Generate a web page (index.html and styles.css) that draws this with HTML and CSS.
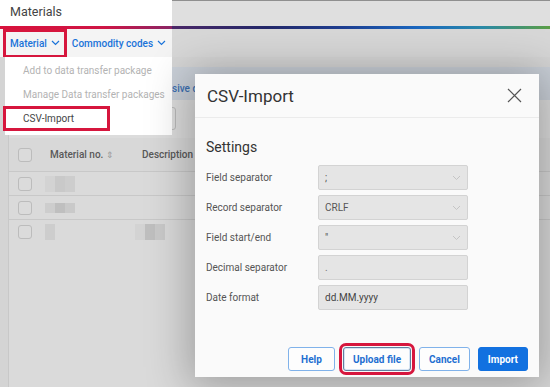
FILE: index.html
```html
<!DOCTYPE html>
<html>
<head>
	<meta charset="utf-8" />
	<title>Materials</title>
	<link rel="stylesheet" href="styles.css">
</head>
<body>
<div class="page">
	<div class="topbar">
		<div class="brand">Materials</div>
		<div class="topbar-rest"></div>
	</div>
	<div class="stripe">
		<div class="stripe-lit"></div>
		<div class="stripe-dim"></div>
	</div>
	<div class="navbar">
		<div class="nav-lit">
			<span class="nav-item nav-hl">Material
				<svg width="9" height="6" viewBox="0 0 9 6"><path d="M1 1l3.5 3.5L8 1" fill="none" stroke="#1a73d9" stroke-width="1.2"/></svg>
			</span>
			<span class="nav-item">Commodity codes
				<svg width="9" height="6" viewBox="0 0 9 6"><path d="M1 1l3.5 3.5L8 1" fill="none" stroke="#1a73d9" stroke-width="1.2"/></svg>
			</span>
		</div>
		<div class="nav-rest"></div>
	</div>
	<div class="main">
		<div class="card">
			<div class="card-tabs"><span class="tab-link">sive d</span></div>
			<div class="card-tools"><span class="tool-btn"></span></div>
			<div class="thead">
				<div class="cell-check"><span class="checkbox"></span></div>
				<div class="cell-no">Material no. <span class="sort">&#8661;</span></div>
				<div class="cell-desc">Description</div>
			</div>
			<div class="trow">
				<div class="cell-check"><span class="checkbox"></span></div>
				<div class="cell-no">
					<span class="blur blur-tall"><i class="p1"></i><i class="p3"></i><i class="p2"></i></span>
				</div>
			</div>
			<div class="trow">
				<div class="cell-check"><span class="checkbox"></span></div>
				<div class="cell-no">
					<span class="blur"><i class="p2"></i><i class="p4"></i><i class="p3"></i></span>
				</div>
			</div>
			<div class="trow trow-last">
				<div class="cell-check"><span class="checkbox"></span></div>
				<div class="cell-no">
					<span class="blur blur-tall"><i class="p2"></i></span>
				</div>
				<div class="cell-desc">
					<span class="blur blur-tall blur-desc"><i class="p1"></i><i class="p4"></i><i class="p3"></i></span>
				</div>
			</div>
		</div>
	</div>

	<ul class="menu">
		<li class="disabled">Add to data transfer package</li>
		<li class="disabled">Manage Data transfer packages</li>
		<li><span class="menu-hl">CSV-Import</span></li>
	</ul>

	<div class="modal">
		<div class="modal-head">
			<span class="modal-title">CSV-Import</span>
			<svg class="close" width="15" height="15" viewBox="0 0 15 15"><path d="M1 1l13 13M14 1L1 14" stroke="#555" stroke-width="1.2" fill="none"/></svg>
		</div>
		<div class="modal-body">
			<div class="section-title">Settings</div>
			<div class="form">
				<label>Field separator</label>
				<div class="field select">;<svg width="9" height="6" viewBox="0 0 9 6"><path d="M1 1l3.5 3.5L8 1" fill="none" stroke="#c4c4c4" stroke-width="1"/></svg></div>
				<label>Record separator</label>
				<div class="field select">CRLF<svg width="9" height="6" viewBox="0 0 9 6"><path d="M1 1l3.5 3.5L8 1" fill="none" stroke="#c4c4c4" stroke-width="1"/></svg></div>
				<label>Field start/end</label>
				<div class="field select">"<svg width="9" height="6" viewBox="0 0 9 6"><path d="M1 1l3.5 3.5L8 1" fill="none" stroke="#c4c4c4" stroke-width="1"/></svg></div>
				<label>Decimal separator</label>
				<div class="field">.</div>
				<label>Date format</label>
				<div class="field field-dark">dd.MM.yyyy</div>
			</div>
		</div>
		<div class="modal-foot">
			<button class="btn">Help</button>
			<button class="btn btn-focus">Upload file</button>
			<button class="btn">Cancel</button>
			<button class="btn btn-primary">Import</button>
		</div>
	</div>
</div>
</body>
</html>
```

FILE: styles.css
```css
* {
	margin: 0;
	padding: 0;
	box-sizing: border-box;
}
ul {
	list-style: none;
}
body {
	font-family: Roboto, "Liberation Sans", sans-serif;
	background: #d9d9d9;
	width: 550px;
	height: 387px;
	overflow: hidden;
}
.page {
	position: relative;
	height: 387px;
	display: flex;
	flex-direction: column;
}
.topbar {
	display: flex;
	height: 26px;
}
.brand {
	width: 172px;
	background: #fff;
	color: #444;
	font-size: 12.5px;
	padding-left: 10px;
	line-height: 24px;
}
.topbar-rest {
	flex: 1;
	background: #dfdfdf;
	border-top: 1px solid #8f8f8f;
}
.stripe {
	display: flex;
	height: 3px;
}
.stripe-lit {
	width: 172px;
	background: linear-gradient(90deg, #d8123c 0%, #cf1545 60%, #8a2565 100%);
}
.stripe-dim {
	flex: 1;
	background: linear-gradient(90deg, #4a2767 0%, #24296a 25%, #1f3f91 45%, #1b68c0 65%, #2b8aa8 82%, #5b9e45 100%);
}
.navbar {
	display: flex;
	height: 28px;
}
.nav-lit {
	width: 172px;
	background: #f4f4f4;
	display: flex;
	align-items: center;
	padding-left: 10px;
	gap: 12px;
}
.nav-item {
	color: #1a73d9;
	font-size: 10px;
	font-weight: 500;
	display: flex;
	align-items: center;
	gap: 4px;
}
.nav-hl {
	outline: 3px solid #d6163d;
	outline-offset: 4px;
	padding: 2px 0;
}
.nav-rest {
	flex: 1;
	background: #d7d7d7;
}
.main {
	flex: 1;
	padding: 10px 0 0 8px;
	background: #d4d4d4;
	display: flex;
}
.card {
	flex: 1;
	background: #dadada;
	border-left: 1px solid #c8c8c8;
}
.card-tabs {
	height: 33px;
	background: #c9cfd7;
	display: flex;
	align-items: center;
	padding: 9px 0 0 163px;
}
.tab-link {
	color: #3b6fb2;
	font-size: 10px;
	font-weight: 500;
	white-space: nowrap;
}
.card-tools {
	height: 38px;
	background: #dcdcdc;
	padding: 7px 0 0 126px;
}
.tool-btn {
	display: block;
	width: 41px;
	height: 23px;
	border: 1px solid #b9b9b9;
	border-radius: 3px;
}
.thead,
.trow {
	display: flex;
	align-items: center;
	border-bottom: 1px solid #c8c8c8;
}
.thead {
	height: 34px;
	background: #d8d8d8;
	color: #595959;
	font-size: 10px;
	font-weight: 500;
}
.trow {
	height: 24px;
}
.trow-last {
	border-bottom: none;
}
.cell-check {
	width: 41px;
	padding-left: 9px;
	display: flex;
}
.checkbox {
	width: 14px;
	height: 14px;
	border: 1px solid #bcbcbc;
	border-radius: 3px;
	background: #dbdbdb;
}
.cell-no {
	width: 92px;
}
.sort {
	color: #9a9a9a;
	font-size: 9px;
}
.blur {
	display: flex;
	margin-left: -5px;
}
.blur i {
	display: block;
	width: 10px;
	height: 10px;
}
.blur-tall i {
	height: 16px;
}
.blur-desc {
	margin-left: -7px;
}
.p1 { background: #d3d3d3; }
.p2 { background: #cdcdcd; }
.p3 { background: #c9c9c9; }
.p4 { background: #bfbfbf; }

.menu {
	position: absolute;
	left: 5px;
	top: 57px;
	width: 167px;
	height: 78px;
	background: #fff;
	padding-top: 2px;
	font-size: 10px;
	color: #444;
}
.menu li {
	height: 24px;
	line-height: 24px;
	padding-left: 18px;
}
.menu .disabled {
	color: #b3b3b3;
}
.menu-hl {
	display: inline-block;
	margin-left: -17px;
	padding-left: 17px;
	width: 101px;
	line-height: 19px;
	outline: 3px solid #d6163d;
}
.modal {
	position: absolute;
	left: 195px;
	top: 74px;
	width: 344px;
	height: 303px;
	background: #fafafa;
	box-shadow: 0 4px 40px 6px rgba(0, 0, 0, 0.28);
	display: flex;
	flex-direction: column;
}
.modal-head {
	height: 44px;
	border-bottom: 1px solid #ebebeb;
	display: flex;
	align-items: center;
	justify-content: space-between;
	padding: 0 17px 0 12px;
}
.modal-title {
	font-size: 17px;
	color: #333;
}
.modal-body {
	padding: 19px 11px 0;
}
.section-title {
	font-size: 14px;
	color: #333;
	line-height: 20px;
	margin-bottom: 8px;
}
.form {
	display: grid;
	grid-template-columns: 112px 150px;
	grid-auto-rows: 25px;
	row-gap: 5px;
	align-items: center;
}
.form label {
	font-size: 10px;
	color: #555;
}
.field {
	height: 25px;
	background: #e5e5e5;
	border: 1px solid #d3d3d3;
	border-radius: 2px;
	font-size: 10px;
	color: #777;
	padding: 0 6px;
	display: flex;
	align-items: center;
	justify-content: space-between;
}
.field-dark {
	color: #444;
}
.select {
	color: #555;
}
.modal-foot {
	margin-top: auto;
	display: flex;
	justify-content: flex-end;
	gap: 8px;
	padding: 0 11px 6px;
}
.btn {
	height: 24px;
	min-width: 47px;
	padding: 0 9px;
	font-family: Roboto, "Liberation Sans", sans-serif;
	font-size: 10px;
	font-weight: 700;
	color: #1f6fd1;
	background: #fdfdfd;
	border: 1px solid #80b2ea;
	border-radius: 3px;
}
.btn-focus {
	border-color: #61809f;
	box-shadow: inset 0 0 0 1px #d6e4f4;
	outline: 3px solid #d6163d;
	outline-offset: 1px;
}
.btn-primary {
	background: #1271e0;
	border-color: #1271e0;
	color: #fff;
}
```
